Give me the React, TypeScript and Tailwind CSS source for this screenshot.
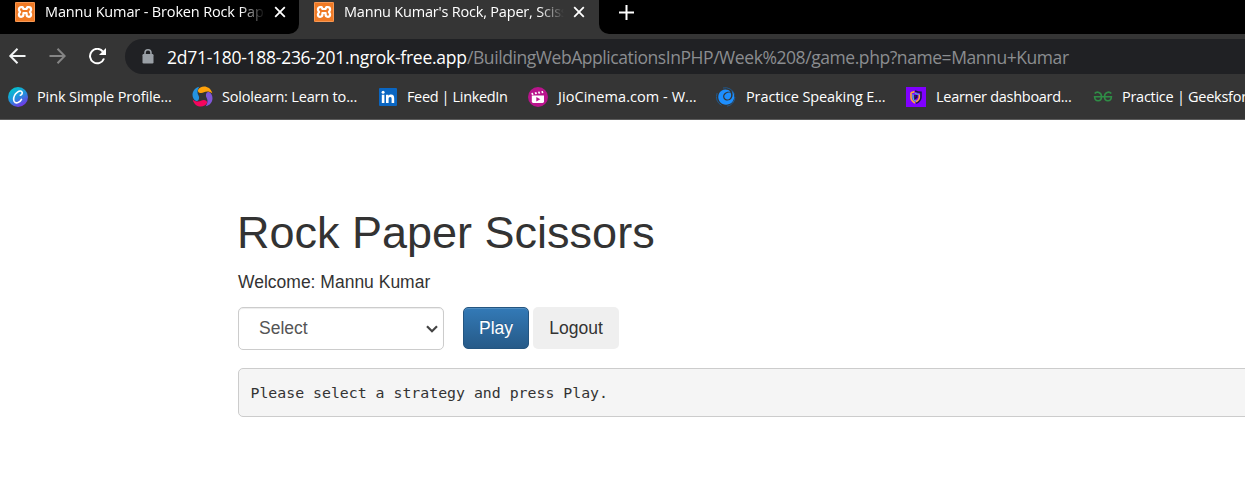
import React from "react";

function XamppIcon() {
  return (
    <svg width="20" height="20" viewBox="0 0 20 20" className="shrink-0">
      <rect width="20" height="20" rx="1" fill="#f07a25" />
      <rect x=".5" y=".5" width="19" height="19" rx="1" fill="none" stroke="#f59a58" />
      <path
        d="M6.200 5.200h1.500l.8 1.800h3l.8-1.800h1.500c1.400 0 2.300 1 2.300 2.300 0 1-.5 1.700-1.200 2.500.7.8 1.200 1.500 1.200 2.500 0 1.300-.9 2.300-2.300 2.300-1.300 0-2.200-.8-2.200-2.200v-1.600H8.400v1.600c0 1.400-.9 2.200-2.200 2.200-1.400 0-2.300-1-2.300-2.300 0-1 .5-1.700 1.200-2.500-.7-.8-1.200-1.500-1.200-2.500 0-1.300.9-2.300 2.300-2.300z"
        fill="none"
        stroke="#fff"
        strokeWidth="2.200"
        strokeLinejoin="round"
      />
    </svg>
  );
}

function CloseIcon() {
  return (
    <svg width="12" height="12" viewBox="0 0 12 12" className="shrink-0" stroke="#fff" strokeWidth="1.8">
      <path d="M1.200 1.200l9.600 9.600M10.800 1.200l-9.600 9.600" />
    </svg>
  );
}

function BackIcon() {
  return (
    <svg width="18" height="18" viewBox="0 0 18 18" fill="none" stroke="#f1f3f4" strokeWidth="2">
      <path d="M17.500 8H3M9.500.8L2.300 8l7.200 7.200" />
    </svg>
  );
}

function ForwardIcon() {
  return (
    <svg width="18" height="18" viewBox="0 0 18 18" fill="none" stroke="#858585" strokeWidth="2">
      <path d="M1.500 8H16M9.500.8L16.700 8l-7.200 7.200" />
    </svg>
  );
}

function ReloadIcon() {
  return (
    <svg width="18" height="18" viewBox="0 0 18 18" fill="none">
      <path d="M16 10.500A7.200 7.200 0 1 1 14.900 3.600" stroke="#fff" strokeWidth="2" />
      <path d="M18 0v7h-7z" fill="#fff" />
    </svg>
  );
}

function LockIcon() {
  return (
    <svg width="12" height="15" viewBox="0 0 12 15">
      <rect x=".5" y="5" width="11" height="9.500" rx="1.200" fill="#9aa0a6" />
      <path d="M3 6V3.800a3 3 0 0 1 6 0V6" fill="none" stroke="#9aa0a6" strokeWidth="1.600" />
    </svg>
  );
}

function CanvaIcon() {
  return (
    <svg width="20" height="20" viewBox="0 0 20 20">
      <defs>
        <linearGradient id="canva" x1=".2" y1="0" x2=".75" y2="1">
          <stop offset="0" stopColor="#00c9cc" />
          <stop offset=".5" stopColor="#2391dc" />
          <stop offset="1" stopColor="#7d2ae8" />
        </linearGradient>
      </defs>
      <circle cx="10" cy="10" r="10" fill="url(#canva)" />
      <path
        d="M12.300 8.200c1.400-.2 2.300-1.900 1.800-3.200-.5-1.400-2.900-1.200-4.600.1-2.500 1.900-4.100 5.200-3.800 7.900.3 2.400 2.200 3.400 4.300 2.600 1.500-.5 2.700-1.600 3.500-3.200"
        fill="none"
        stroke="#fff"
        strokeWidth="1.600"
        strokeLinecap="round"
      />
    </svg>
  );
}

function SololearnIcon() {
  return (
    <svg width="21" height="21" viewBox="0 0 21 21">
      <path d="M6 4C8-.8 18-1.500 20.300 7.300c-2.800-2-6-2.300-8.300-1C9.200 8 5.200 6.800 6 4z" fill="#ffa20a" />
      <path d="M17 6c4.800 2 5.500 12-3.300 14.300 2-2.800 2.300-6 1-8.300C13 9.200 14.200 5.200 17 6z" fill="#8156d8" />
      <path d="M15 17C13 21.800 3 22.500.7 13.700c2.800 2 6 2.300 8.300 1 2.800-1.700 6.800-.5 6 2.300z" fill="#f5055e" />
      <path d="M4 15C-.8 13-1.500 3 7.300.7c-2 2.800-2.300 6-1 8.300C8 11.800 6.800 15.800 4 15z" fill="#2493df" />
    </svg>
  );
}

function LinkedInIcon() {
  return (
    <svg width="18" height="18" viewBox="0 0 18 18">
      <rect width="18" height="18" rx="1" fill="#0a66c2" />
      <circle cx="4.100" cy="4.200" r="1.500" fill="#fff" />
      <path d="M2.800 6.800h2.600V15H2.800zM7 6.800h2.500v1.100c.5-.8 1.400-1.300 2.600-1.300 2.400 0 3.100 1.500 3.100 3.800V15h-2.600v-4.100c0-1.200-.2-2-1.400-2s-1.600.8-1.600 2V15H7z" fill="#fff" />
    </svg>
  );
}

function JioIcon() {
  return (
    <svg width="20" height="20" viewBox="0 0 20 20">
      <circle cx="10" cy="10" r="10" fill="#b9148c" />
      <path d="M3.800 8.600h12.200v6a1.400 1.400 0 0 1-1.400 1.400H5.200a1.400 1.400 0 0 1-1.400-1.400z" fill="#fff" />
      <path d="M3.300 6.100l1.500-.3.800 1.900-1.700.3zM6.600 5.400l1.700-.3.700 1.900-1.700.3zM9.900 4.800l1.600-.3.800 1.900-1.700.3zM13.300 4.200l1.600-.3.500 2.100-1.500.2z" fill="#fff" />
      <path d="M8.300 9.900l4 2.300-4 2.300z" fill="#b9148c" />
    </svg>
  );
}

function SpeakingIcon() {
  return (
    <svg width="20" height="20" viewBox="0 0 20 20" fill="none">
      <path d="M7 1A9.500 9.500 0 0 1 18.500 7.500M1.200 6A9.500 9.500 0 0 0 5.500 18.300M11 19.200A9.300 9.300 0 0 0 18.900 10" stroke="#21588c" strokeWidth="1" />
      <path
        d="M15.500 3.500C18.800 6.200 19.300 11.500 16.300 15 13 18.700 7 18.700 4 15 1.300 11.500 1.800 6.300 5.500 3.800 8.500 1.800 12.500 2.300 14.500 5c-2-.6-4.600-.2-6.200 1.500-1.800 2-1.500 4.800.4 6.200 2.300 1.600 5.400.9 6.900-1.400 1.500-2.400 1.400-5.400-.1-7.800z"
        fill="#1d8fff"
      />
      <path d="M14.500 5.500c1.300 2.500.6 5.700-1.700 6.700-2 .9-4.500-.3-4.500-2.600 0-2.200 2.500-4.400 6.200-4.100z" fill="#1d8fff" />
    </svg>
  );
}

function LearnerIcon() {
  return (
    <svg width="20" height="20" viewBox="0 0 20 20" fill="none">
      <rect width="20" height="20" fill="#8000ff" />
      <path d="M5 5.500c1.500 0 2.500-.3 3.500-1M5 5.500v5c0 2.200 1.500 4 4 5.500" stroke="#ffae32" strokeWidth="1.600" />
      <path d="M9 3.800c1.800 1 3.800 1.500 6 1.500v5c0 2.700-2 4.700-5 6" stroke="#191b42" strokeWidth="1.500" />
      <path d="M7 7.200v3.300c0 1.600 1 2.700 2.700 3.800M9 6.300c1 .7 2.500 1 4 1" stroke="#42c7cf" strokeWidth="1.300" />
      <path d="M13.300 7.500v3c0 1.800-1.200 3-3.300 4.300" stroke="#ffae32" strokeWidth="1.400" />
      <path d="M9 8v3.500l1.800-1.200V8" stroke="#1c1540" strokeWidth="1.500" />
    </svg>
  );
}

function GeeksIcon() {
  return (
    <svg width="20" height="12" viewBox="0 0 20 12" fill="none" stroke="#2f8d46" strokeWidth="1.600">
      <path d="M1.700 2.600C3.800 0 8.500 1 8.500 5.500c0 5.600-6.600 5.600-6.900.3h16.800c-.3 5.300-6.900 5.300-6.900-.3C11.500 1 16.200 0 18.300 2.600" />
    </svg>
  );
}

function Tab({ title, active }: { title: string; active?: boolean }) {
  return (
    <div
      className={
        active
          ? "flex h-full w-[300px] shrink-0 bg-[#353535] pl-[15px] pt-[2px]"
          : "flex h-full w-[299px] shrink-0 rounded-br-[10px] bg-black pl-[15px] pt-[2px]"
      }
    >
      <XamppIcon />
      <div
        className={`-mt-px ml-[10px] h-[22px] w-[220px] overflow-hidden whitespace-nowrap text-[14.500px] leading-[21px] text-white [mask-image:linear-gradient(to_right,black_195px,transparent_220px)] ${
          active ? "tracking-[-0.2px]" : "tracking-[-0.15px]"
        }`}
      >
        {title}
      </div>
      <div className="ml-[9px] mt-[4px]">
        <CloseIcon />
      </div>
    </div>
  );
}

const bookmarks = [
  { icon: <CanvaIcon />, label: "Pink Simple Profile...", cell: "w-[184px]", slot: "w-[29px]", text: "tracking-[-0.12px]" },
  { icon: <SololearnIcon />, label: "Sololearn: Learn to...", cell: "w-[187px]", slot: "w-[30px]", text: "tracking-[-0.18px]" },
  { icon: <LinkedInIcon />, label: "Feed | LinkedIn", cell: "w-[149px]", slot: "w-[28px]", text: "tracking-[-0.36px]" },
  { icon: <JioIcon />, label: "JioCinema.com - W...", cell: "w-[188px]", slot: "w-[30px]", text: "tracking-[0.06px]" },
  { icon: <SpeakingIcon />, label: "Practice Speaking E...", cell: "w-[190px]", slot: "w-[30px]", text: "tracking-[-0.1px]" },
  { icon: <LearnerIcon />, label: "Learner dashboard...", cell: "w-[187px]", slot: "w-[30px]", text: "tracking-[-0.28px]" },
  { icon: <GeeksIcon />, label: "Practice | Geeksfor", cell: "w-[180px]", slot: "w-[29px]", text: "tracking-[-0.27px]" },
];

export default function App() {
  return (
    <div className="h-[477px] w-full overflow-hidden bg-white">
      <header className="flex h-[120px] flex-col border-b border-[#5c5c5c] bg-[#353535] font-['Open_Sans','Noto_Sans',sans-serif]">
        <div className="flex h-[34px] shrink-0">
          <Tab title="Mannu Kumar - Broken Rock Paper" />
          <Tab title="Mannu Kumar's Rock, Paper, Scissors" active />
          <div className="flex-1 rounded-bl-[10px] bg-black pl-[20px] pt-[5px]">
            <svg width="15" height="15" viewBox="0 0 15 15" stroke="#fff" strokeWidth="2">
              <path d="M7.500 0v15M0 7.500h15" />
            </svg>
          </div>
        </div>
        <div className="mt-[5px] flex h-[35px] shrink-0 items-center">
          <div className="flex w-[125px] shrink-0 gap-[22px] pl-[8px]">
            <BackIcon />
            <ForwardIcon />
            <ReloadIcon />
          </div>
          <div className="flex h-full flex-1 items-center overflow-hidden rounded-l-full bg-[#202124] pl-[17px]">
            <LockIcon />
            <div className="ml-[13px] flex whitespace-nowrap pt-px text-[17.500px]">
              <span className="w-[300px] tracking-[-0.27px] text-white">2d71-180-188-236-201.ngrok-free.app</span>
              <span className="tracking-[-0.43px] text-[#8b8d90]">/BuildingWebApplicationsInPHP/Week%208/game.php?name=Mannu+Kumar</span>
            </div>
          </div>
        </div>
        <nav className="flex h-[45px] shrink-0 items-center overflow-hidden pl-[8px]">
          {bookmarks.map((b) => (
            <div key={b.label} className={`flex shrink-0 items-center ${b.cell}`}>
              <div className={`flex shrink-0 ${b.slot}`}>{b.icon}</div>
              <span className={`whitespace-nowrap text-[14.500px] leading-[20px] text-white ${b.text}`}>{b.label}</span>
            </div>
          ))}
        </nav>
      </header>
      <main className="pl-[238px] pt-[88px] font-['Liberation_Sans',Arial,sans-serif] text-[17.500px] text-[#333]">
        <h1 className="-ml-px text-[45px] leading-[50px]">Rock Paper Scissors</h1>
        <p className="mt-[12px] leading-[25px]">Welcome: Mannu Kumar</p>
        <form className="mt-[12px] flex h-[43px] items-start" onSubmit={(e) => e.preventDefault()}>
          <button type="button" className="mr-[19px] flex h-[43px] w-[206px] items-center justify-between rounded-[5px] border border-[#ccc] bg-white pl-[20px] pr-[5px] text-[#555] shadow-[inset_0_1px_1px_rgba(0,0,0,0.075)]">
            <span>Select</span>
            <svg width="12" height="8" viewBox="0 0 12 8" fill="none" stroke="#444" strokeWidth="2.200">
              <path d="M1 1.200l5 5 5-5" />
            </svg>
          </button>
          <button type="submit" className="mr-[4px] h-[42px] w-[66px] rounded-[5px] border border-[#245580] bg-linear-to-b from-[#337ab7] to-[#265a88] text-white shadow-[inset_0_1px_0_rgba(255,255,255,0.15)] [text-shadow:0_-1px_0_rgba(0,0,0,0.2)]">
            Play
          </button>
          <button type="button" className="h-[42px] w-[86px] rounded-[5px] bg-[#efefef]">Logout</button>
        </form>
        <pre className="mt-[18px] h-[49px] w-[1100px] rounded-[5px] border border-[#ccc] bg-[#f5f5f5] pl-[11.500px] font-['DejaVu_Sans_Mono',monospace] text-[14.850px] leading-[48px]">
          Please select a strategy and press Play.
        </pre>
      </main>
    </div>
  );
}
